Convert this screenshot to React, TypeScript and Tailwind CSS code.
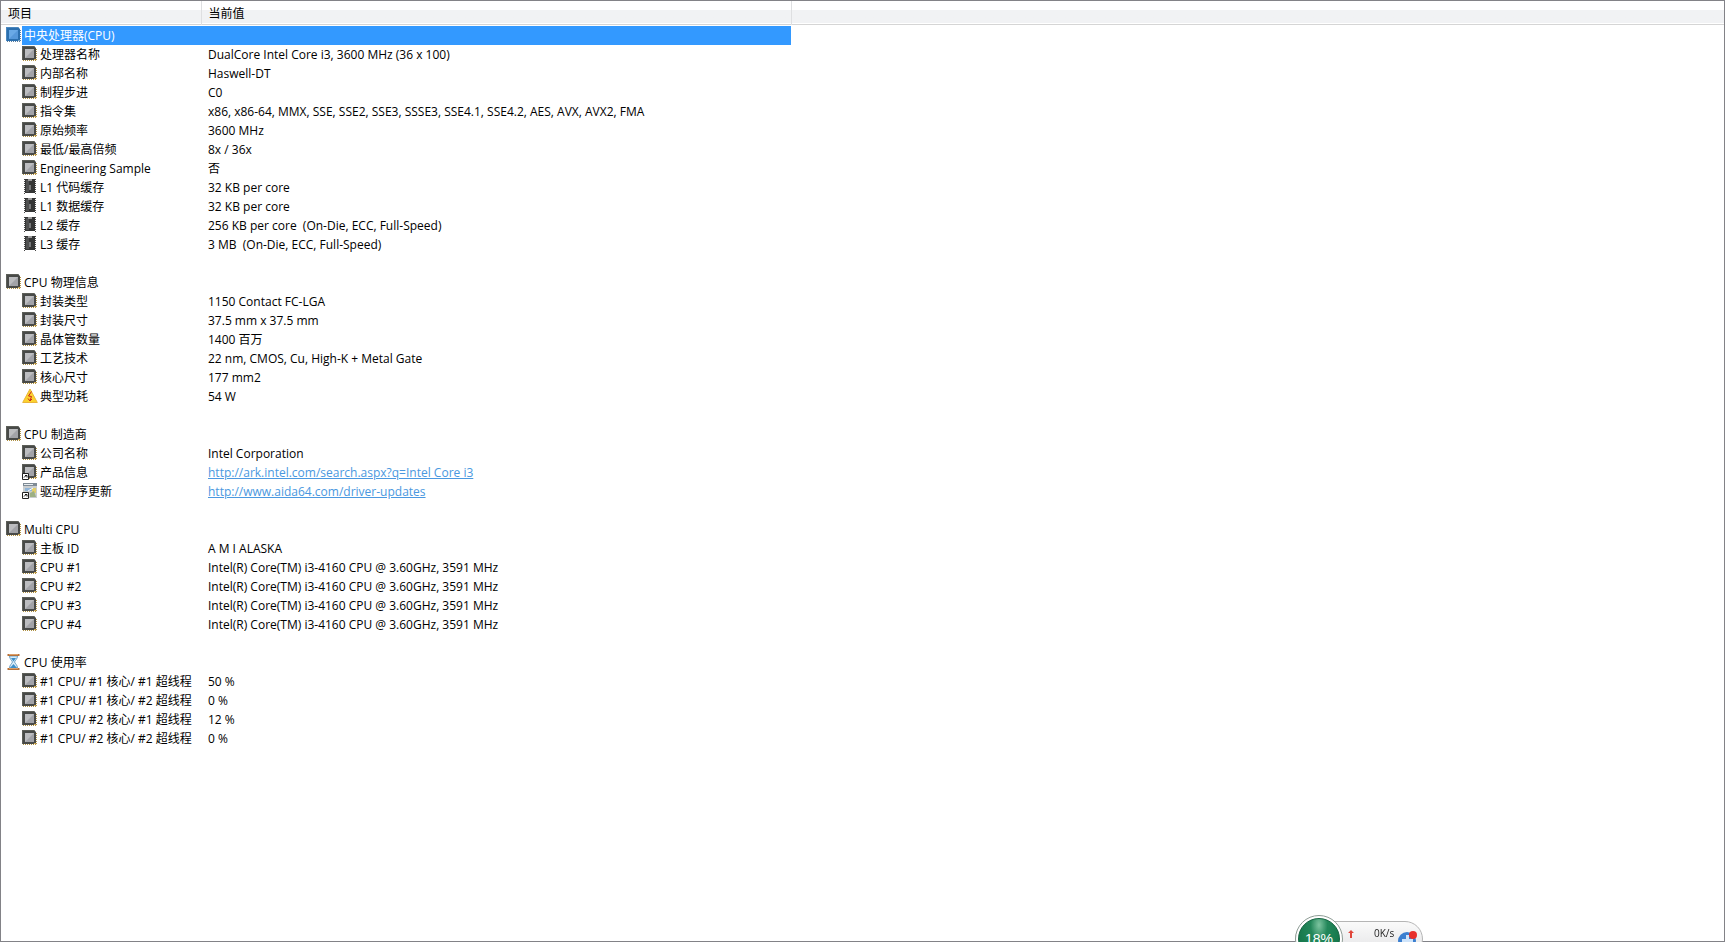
type IconName = "cpu" | "cpuBlue" | "cpuLink" | "chip" | "warning" | "update" | "hourglass";

type Row = {
  icon: IconName;
  label: string;
  value?: string;
  href?: string;
};

type Group = {
  icon: IconName;
  label: string;
  selected?: boolean;
  rows: Row[];
};

const cpuName = "Intel(R) Core(TM) i3-4160 CPU @ 3.60GHz, 3591 MHz";

const groups: Group[] = [
  {
    icon: "cpuBlue",
    label: "中央处理器(CPU)",
    selected: true,
    rows: [
      { icon: "cpu", label: "处理器名称", value: "DualCore Intel Core i3, 3600 MHz (36 x 100)" },
      { icon: "cpu", label: "内部名称", value: "Haswell-DT" },
      { icon: "cpu", label: "制程步进", value: "C0" },
      { icon: "cpu", label: "指令集", value: "x86, x86-64, MMX, SSE, SSE2, SSE3, SSSE3, SSE4.1, SSE4.2, AES, AVX, AVX2, FMA" },
      { icon: "cpu", label: "原始频率", value: "3600 MHz" },
      { icon: "cpu", label: "最低/最高倍频", value: "8x / 36x" },
      { icon: "cpu", label: "Engineering Sample", value: "否" },
      { icon: "chip", label: "L1 代码缓存", value: "32 KB per core" },
      { icon: "chip", label: "L1 数据缓存", value: "32 KB per core" },
      { icon: "chip", label: "L2 缓存", value: "256 KB per core  (On-Die, ECC, Full-Speed)" },
      { icon: "chip", label: "L3 缓存", value: "3 MB  (On-Die, ECC, Full-Speed)" },
    ],
  },
  {
    icon: "cpu",
    label: "CPU 物理信息",
    rows: [
      { icon: "cpu", label: "封装类型", value: "1150 Contact FC-LGA" },
      { icon: "cpu", label: "封装尺寸", value: "37.5 mm x 37.5 mm" },
      { icon: "cpu", label: "晶体管数量", value: "1400 百万" },
      { icon: "cpu", label: "工艺技术", value: "22 nm, CMOS, Cu, High-K + Metal Gate" },
      { icon: "cpu", label: "核心尺寸", value: "177 mm2" },
      { icon: "warning", label: "典型功耗", value: "54 W" },
    ],
  },
  {
    icon: "cpu",
    label: "CPU 制造商",
    rows: [
      { icon: "cpu", label: "公司名称", value: "Intel Corporation" },
      {
        icon: "cpuLink",
        label: "产品信息",
        value: "http://ark.intel.com/search.aspx?q=Intel Core i3",
        href: "http://ark.intel.com/search.aspx?q=Intel%20Core%20i3",
      },
      {
        icon: "update",
        label: "驱动程序更新",
        value: "http://www.aida64.com/driver-updates",
        href: "http://www.aida64.com/driver-updates",
      },
    ],
  },
  {
    icon: "cpu",
    label: "Multi CPU",
    rows: [
      { icon: "cpu", label: "主板 ID", value: "A M I ALASKA" },
      { icon: "cpu", label: "CPU #1", value: cpuName },
      { icon: "cpu", label: "CPU #2", value: cpuName },
      { icon: "cpu", label: "CPU #3", value: cpuName },
      { icon: "cpu", label: "CPU #4", value: cpuName },
    ],
  },
  {
    icon: "hourglass",
    label: "CPU 使用率",
    rows: [
      { icon: "cpu", label: "#1 CPU/ #1 核心/ #1 超线程", value: "50 %" },
      { icon: "cpu", label: "#1 CPU/ #1 核心/ #2 超线程", value: "0 %" },
      { icon: "cpu", label: "#1 CPU/ #2 核心/ #1 超线程", value: "12 %" },
      { icon: "cpu", label: "#1 CPU/ #2 核心/ #2 超线程", value: "0 %" },
    ],
  },
];

function CpuShape({ blue = false }: { blue?: boolean }) {
  return (
    <>
      {/* gold pins along the right and bottom edges */}
      <path d="M14.5 3v12M1 14.5h14" stroke={blue ? "#5b7fa0" : "#b09245"} strokeDasharray="1 1" />
      <path d="M0 0h12l2 2v12H0z" fill={blue ? "#2b6fae" : "#484a48"} />
      <path d="M0 0h12l1 1H1v13H0z" fill={blue ? "#4a87bf" : "#5c5e58"} />
      <path d="M3 3h9v9H3z" fill={blue ? "#69a9e6" : "#bcbdc0"} />
      <path d="M3 12L12 3v9z" fill={blue ? "#5698da" : "#a2a3a8"} />
      <path d="M12 13h2v1h-2z" fill={blue ? "#7aa2c0" : "#c9a24c"} />
    </>
  );
}

function ShortcutArrow() {
  return (
    <>
      <path d="M0.5 9.5h6v6h-6z" fill="#fff" stroke="#222" />
      <path d="M2 13.5L4.5 11M3 11.5h2v2" fill="none" stroke="#111" />
    </>
  );
}

function RowIcon({ name }: { name: IconName }) {
  return (
    <svg className="mt-px size-4 shrink-0" viewBox="0 0 16 16" aria-hidden="true">
      {name === "cpu" && <CpuShape />}
      {name === "cpuBlue" && <CpuShape blue />}
      {name === "cpuLink" && (
        <>
          <CpuShape />
          <ShortcutArrow />
        </>
      )}
      {name === "chip" && (
        <>
          <path d="M2.5 0v15M13.5 0v15" stroke="#444" strokeDasharray="1 1" />
          <path d="M3 0h10v14H3z" fill="#353636" />
          <path d="M4 1h3v12H4z" fill="#505151" />
          <path d="M6 0h4v2H6z" fill="#999" />
          <path d="M7 6h2v5H7z" fill="#77787a" />
        </>
      )}
      {name === "warning" && (
        <>
          <path d="M8 1L15.3 14.5H.7z" fill="#fcd22e" stroke="#eab53a" strokeLinejoin="round" />
          <path d="M9.5 3.5L6.5 8 9.5 8.5 8 12.5M6 10.5L8 13 10 11" fill="none" stroke="#c8261b" />
        </>
      )}
      {name === "update" && (
        <>
          <path d="M1 0h14v15H1z" fill="#c9cdcf" />
          <path d="M1 0h14v3H1z" fill="#7f8b95" />
          <path d="M2 1h9v1H2z" fill="#e8edf0" />
          <path d="M3 5h7v3H3z" fill="#8fb4d8" />
          <path d="M10 5h4v5h-4z" fill="#e3cf6a" />
          <path d="M8 10l4-2 2 6H8z" fill="#9db083" />
          <path d="M6 8l5-3" stroke="#fff" />
          <ShortcutArrow />
        </>
      )}
      {name === "hourglass" && (
        <>
          <path d="M3.5 2h8c0 3-2.5 4.5-3 6 .5 1.5 3 3 3 6h-8c0-3 2.5-4.5 3-6-.5-1.5-3-3-3-6z" fill="#d9ecf8" stroke="#6fa3c8" />
          <path d="M5 4h5L7.5 7.5zM7.5 10l3.5 4H4z" fill="#3d8fc9" />
          <path d="M1.5 0h12v2h-12zM1.5 14h12v2h-12z" fill="#b5713a" />
          <path d="M3 0h9v1H3zM3 14h9v1H3z" fill="#dda06a" />
        </>
      )}
    </svg>
  );
}

function GroupRows({ group, last }: { group: Group; last: boolean }) {
  return (
    <tbody>
      <tr className="h-[19px]">
        <td className="p-0" colSpan={2}>
          <div className="flex h-[19px] items-start pl-[5px]">
            <RowIcon name={group.icon} />
            <span
              className={
                group.selected
                  ? "h-[19px] grow bg-[#3399ff] pl-0.5 text-white"
                  : "h-[19px] grow pl-0.5"
              }
            >
              {group.label}
            </span>
          </div>
        </td>
        <td />
      </tr>
      {group.rows.map((row) => (
        <tr key={row.label} className="h-[19px]">
          <td className="p-0">
            <div className="flex h-[19px] items-start gap-0.5 pl-[21px]">
              <RowIcon name={row.icon} />
              <span>{row.label}</span>
            </div>
          </td>
          <td className="p-0 pl-[7px] whitespace-pre">
            {row.href ? (
              <a href={row.href} className="text-[#4a98e0] underline">
                {row.value}
              </a>
            ) : (
              row.value
            )}
          </td>
          <td />
        </tr>
      ))}
      {!last && (
        <tr className="h-[19px]">
          <td colSpan={3} />
        </tr>
      )}
    </tbody>
  );
}

function SpeedWidget() {
  return (
    <div className="fixed right-[302px] bottom-[-21px] flex h-12 w-32 items-center">
      <div className="flex h-9 grow items-start rounded-full border border-[#b5b5b5] bg-linear-to-b from-[#fafafa] to-[#e2e2e4] pl-[52px]">
        <svg className="mt-2 h-2 w-1.5 shrink-0" viewBox="0 0 6 8" aria-hidden="true">
          <path d="M3 0l3 3H4v5H2V3H0z" fill="#e0453a" />
        </svg>
        <span className="mt-[3px] ml-5 text-[10px] leading-4 text-[#222]">0K/s</span>
        <svg className="mt-2 ml-1 h-6 w-5 shrink-0" viewBox="0 0 20 24" aria-hidden="true">
          <circle cx="9" cy="11" r="9" fill="#3b7fd0" />
          <path d="M8 5h3v4h4v3h-4v5H8v-5H4V9h4z" fill="#cfe4fa" />
          <circle cx="15" cy="5" r="4" fill="#e8302c" />
        </svg>
      </div>
      <div className="absolute left-0 flex size-12 items-center justify-center rounded-full border border-[#8e9c95] bg-white p-0.5">
        <div className="flex size-full items-center justify-center rounded-full border border-[#12633f] bg-radial-[at_50%_15%] from-[#7dc4a0] via-[#23875a] via-30% to-[#0f7044] font-['Liberation_Sans',Arial,sans-serif] text-sm text-white">
          18%
        </div>
      </div>
    </div>
  );
}

export default function App() {
  return (
    <main className="min-h-screen overflow-hidden border border-[#828287] bg-white font-['Open_Sans','Noto_Sans_CJK_SC',sans-serif] text-xs leading-[19px] text-black">
      <table className="w-full table-fixed border-collapse">
        <colgroup>
          <col className="w-[200px]" />
          <col className="w-[590px]" />
          <col />
        </colgroup>
        <thead>
          <tr className="h-[23px] border-b border-[#d5d5d5] bg-linear-to-b from-white from-42% to-[#f1f2f4] to-42% text-left">
            <th className="border-r border-[#dedfe1] p-0 pt-0.5 pl-[7px] font-normal">项目</th>
            <th className="border-r border-[#dedfe1] p-0 pt-0.5 pl-[7px] font-normal">当前值</th>
            <th />
          </tr>
          <tr className="h-0.5">
            <td colSpan={3} className="p-0" />
          </tr>
        </thead>
        {groups.map((group, i) => (
          <GroupRows key={group.label} group={group} last={i === groups.length - 1} />
        ))}
      </table>
      <SpeedWidget />
    </main>
  );
}
